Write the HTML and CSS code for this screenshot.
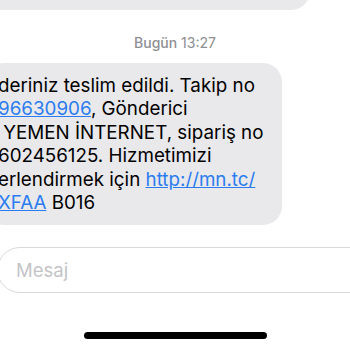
FILE: index.html
```html
<!DOCTYPE html>
<html lang="tr">
<head>
  <meta charset="UTF-8" />
  <title>Mesajlar</title>
  <link rel="stylesheet" href="styles.css">
</head>
<body>
  <div class="thread">
    <div class="bubble bubble-prev"></div>

    <div class="timestamp"><span class="day">Bugün</span> 13:27</div>

    <div class="bubble bubble-in">
      <span class="line">deriniz teslim edildi. Takip no</span>
      <span class="line"><a href="#">96630906</a>, Gönderici</span>
      <span class="line">&nbsp;YEMEN İNTERNET, sipariş no</span>
      <span class="line">602456125. Hizmetimizi</span>
      <span class="line">erlendirmek için <a href="#">http://mn.tc/</a></span>
      <span class="line"><a href="#">XFAA</a> B016</span>
    </div>
  </div>

  <div class="composer">
    <span class="placeholder">Mesaj</span>
  </div>

  <div class="home-indicator"></div>
</body>
</html>
```

FILE: styles.css
```css
/* Base Reset */
* {
  margin: 0;
  padding: 0;
  box-sizing: border-box;
}

body {
  font-family: 'Inter', 'Liberation Sans', sans-serif;
  background: #fff;
  color: #000;
  width: 350px;
  height: 350px;
  overflow: hidden;
  display: flex;
  flex-direction: column;
}

/* Thread */
.thread {
  display: flex;
  flex-direction: column;
}

/* Bubbles */
.bubble {
  background: #e9e9eb;
  border-radius: 19px;
}

.bubble-prev {
  margin-top: -30px;
  margin-left: -40px;
  width: 350px;
  height: 40px;
}

.bubble-in {
  display: flex;
  flex-direction: column;
  margin-left: -15px;
  width: 297px;
  padding: 11px 0 11px 13px;
  font-size: 18.8px;
  line-height: 23.4px;
}

.line {
  white-space: nowrap;
}

.bubble-in a {
  color: #2b7cf0;
  text-decoration: underline;
}

/* Timestamp */
.timestamp {
  margin-top: 24px;
  margin-bottom: 11px;
  text-align: center;
  font-size: 14px;
  line-height: 18px;
  color: #8e8e93;
}

.timestamp .day {
  font-weight: 500;
}

/* Composer */
.composer {
  margin-top: 22px;
  margin-left: -3px;
  width: 400px;
  height: 46px;
  border: 1px solid #d9d9dc;
  border-radius: 23px;
  display: flex;
  align-items: center;
  padding-left: 18px;
}

.placeholder {
  font-size: 18.5px;
  color: #c4c4c7;
}

/* Home Indicator */
.home-indicator {
  margin: 39px auto 0;
  width: 183px;
  height: 7px;
  border-radius: 4px;
  background: #000;
}
```
